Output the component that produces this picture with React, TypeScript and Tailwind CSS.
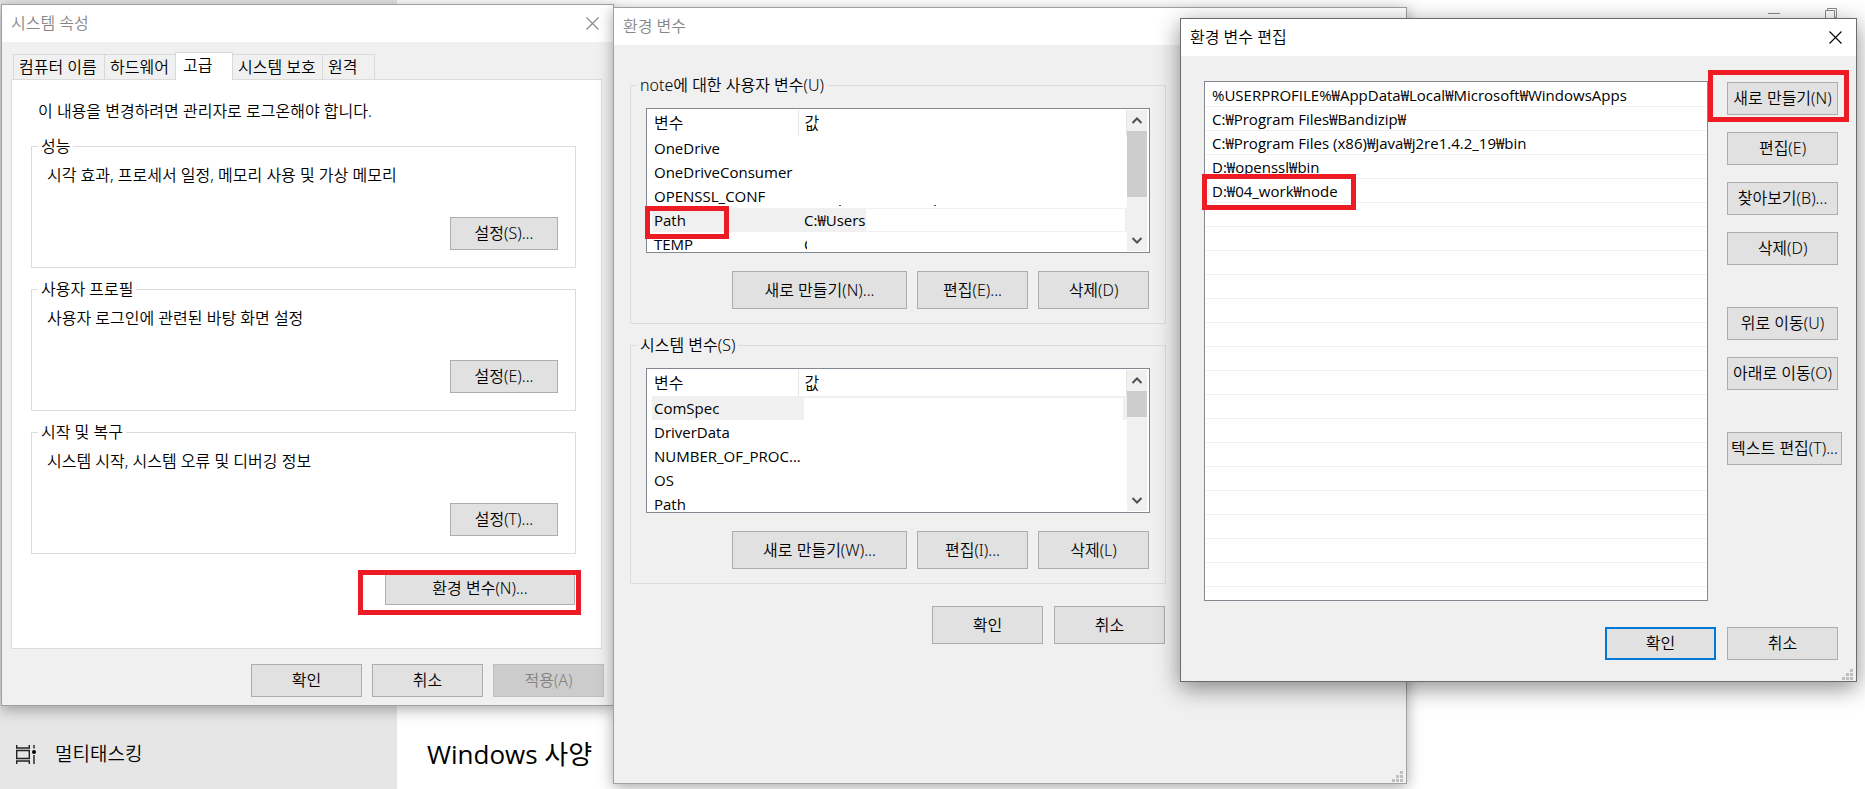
import React from 'react';
import clsx from 'clsx';

interface VariableRow {
  name: string;
  value?: React.ReactNode;
  selected?: boolean;
}

const userVariables: VariableRow[] = [
  { name: 'OneDrive' },
  { name: 'OneDriveConsumer' },
  { name: 'OPENSSL_CONF', value: <TextRemains /> },
  {
    name: 'Path',
    selected: true,
    value: (
      <div className="flex h-6 py-px pr-[2px] leading-[22px]">
        <span className="whitespace-nowrap">C:₩Users</span>
        <span className="flex-1 bg-white" />
      </div>
    ),
  },
  { name: 'TEMP', value: <div className="w-[3px] overflow-hidden">C</div> },
];

const systemVariables: VariableRow[] = [
  {
    name: 'ComSpec',
    selected: true,
    value: (
      <div className="flex h-6 pt-[2px] pr-1">
        <span className="flex-1 bg-white" />
      </div>
    ),
  },
  { name: 'DriverData' },
  { name: 'NUMBER_OF_PROC...' },
  { name: 'OS' },
  { name: 'Path' },
];

const pathEntries = [
  '%USERPROFILE%₩AppData₩Local₩Microsoft₩WindowsApps',
  'C:₩Program Files₩Bandizip₩',
  'C:₩Program Files (x86)₩Java₩j2re1.4.2_19₩bin',
  'D:₩openssl₩bin',
  'D:₩04_work₩node',
];

const EMPTY_ROWS = 16;

const systemGroups = [
  { title: '성능', text: '시각 효과, 프로세서 일정, 메모리 사용 및 가상 메모리', button: '설정(S)...' },
  { title: '사용자 프로필', text: '사용자 로그인에 관련된 바탕 화면 설정', button: '설정(E)...' },
  { title: '시작 및 복구', text: '시스템 시작, 시스템 오류 및 디버깅 정보', button: '설정(T)...' },
];

function TextRemains() {
  return (
    <svg viewBox="0 0 140 24" className="h-6 w-[140px] fill-gray-600">
      <rect x="35" y="21" width="2" height="1" />
      <rect x="130" y="21" width="2" height="1" />
    </svg>
  );
}

function CloseIcon() {
  return (
    <svg viewBox="0 0 13 13" className="h-[13px] w-[13px]" fill="none" stroke="currentColor" strokeWidth="1.1">
      <path d="M.5.5l12 12M12.5.5l-12 12" />
    </svg>
  );
}

function ResizeGrip() {
  return (
    <svg viewBox="0 0 11 11" className="absolute right-[3px] bottom-[1px] h-[11px] w-[11px] fill-[#bfbfbf]">
      <path d="M8 0h3v3H8zM4 4h3v3H4zM8 4h3v3H8zM0 8h3v3H0zM4 8h3v3H4zM8 8h3v3H8z" />
    </svg>
  );
}

function Highlight({ className }: { className: string }) {
  return <div className={clsx('pointer-events-none absolute z-10 border-[#ed1c24]', className)} />;
}

interface ButtonProps extends React.ButtonHTMLAttributes<HTMLButtonElement> {
  primary?: boolean;
}

function Button({ primary, className, ...props }: ButtonProps) {
  return (
    <button
      type="button"
      className={clsx(
        'whitespace-nowrap pb-px leading-5 text-center',
        props.disabled ? 'border border-[#bfbfbf] bg-[#cccccc] text-[#838383]' : 'bg-[#e1e1e1]',
        !props.disabled && (primary ? 'border-2 border-[#0078d7]' : 'border border-[#adadad]'),
        className
      )}
      {...props}
    />
  );
}

interface WindowProps {
  title: string;
  active?: boolean;
  closable?: boolean;
  className: string;
  children: React.ReactNode;
}

function Window({ title, active, closable, className, children }: WindowProps) {
  return (
    <section
      className={clsx(
        'absolute border bg-[#f0f0f0]',
        active
          ? 'border-[#6b6b6b] shadow-[0_6px_22px_rgba(0,0,0,0.45)]'
          : 'border-[#a0a0a0] shadow-[0_3px_14px_rgba(0,0,0,0.35)]',
        className
      )}
    >
      <header
        className={clsx(
          'flex h-[37px] items-center justify-between bg-white pr-[14px] pb-px pl-[9px]',
          active ? 'text-black' : 'text-[#888888]'
        )}
      >
        <h2>{title}</h2>
        {closable && (
          <button type="button" aria-label="닫기">
            <CloseIcon />
          </button>
        )}
      </header>
      {children}
    </section>
  );
}

interface GroupProps {
  title: string;
  className?: string;
  children: React.ReactNode;
}

function Group({ title, className, children }: GroupProps) {
  return (
    <fieldset className="min-w-0 border border-[#dcdcdc]">
      <legend className="ml-[6px] px-[3px] leading-5">{title}</legend>
      <div className={className}>{children}</div>
    </fieldset>
  );
}

function Tab({ label, active, className }: { label: string; active?: boolean; className: string }) {
  return (
    <button
      type="button"
      role="tab"
      aria-selected={!!active}
      className={clsx(
        'border-t border-r border-[#d9d9d9] text-left whitespace-nowrap leading-5',
        active ? 'relative -mb-px h-[28px] border-l bg-white pb-1 pl-[7px]' : 'h-[25px] bg-[#f0f0f0] pl-[5px]',
        className
      )}
    >
      {label}
    </button>
  );
}

function SystemProperties() {
  return (
    <Window title="시스템 속성" closable className="top-1 left-px w-[613px]">
      <div className="pt-[10px] pr-[11px] pb-2 pl-[9px]">
        <div role="tablist" className="flex items-end pl-[2px]">
          <Tab label="컴퓨터 이름" className="w-[92px] border-l" />
          <Tab label="하드웨어" className="w-[70px] border-r-0" />
          <Tab label="고급" active className="w-[58px]" />
          <Tab label="시스템 보호" className="w-[90px]" />
          <Tab label="원격" className="w-[52px]" />
        </div>
        <div className="border border-[#dcdcdc] bg-white pt-[19px] pr-[25px] pb-[43px] pl-[19px]">
          <p className="mb-[13px] pl-[7px] leading-6">이 내용을 변경하려면 관리자로 로그온해야 합니다.</p>
          <div className="flex flex-col gap-[11px]">
            {systemGroups.map((group) => (
              <Group key={group.title} title={group.title} className="pr-[17px] pb-[17px] pl-[15px]">
                <p className="pt-[7px] leading-6">{group.text}</p>
                <div className="mt-[30px] flex justify-end">
                  <Button className="h-[33px] w-[108px]">{group.button}</Button>
                </div>
              </Group>
            ))}
          </div>
          <div className="mt-[18px] flex justify-end pr-px">
            <div className="relative">
              <Button className="h-[33px] w-[190px]">환경 변수(N)...</Button>
              <Highlight className="-top-[2px] -right-[6px] -bottom-[10px] -left-[27px] border-[5px]" />
            </div>
          </div>
        </div>
        <div className="-mr-[2px] mt-[15px] flex justify-end gap-[10px]">
          <Button className="h-[33px] w-[111px]">확인</Button>
          <Button className="h-[33px] w-[111px]">취소</Button>
          <Button className="h-[33px] w-[111px]" disabled>
            적용(A)
          </Button>
        </div>
      </div>
    </Window>
  );
}

function ScrollBar({ thumb }: { thumb: string }) {
  return (
    <div className="flex w-5 shrink-0 flex-col bg-[#f0f0f0]">
      <svg viewBox="0 0 20 21" className="h-[21px] w-5" fill="none" stroke="#505050" strokeWidth="2">
        <path d="M5.500 13l4.500-4.500 4.500 4.500" />
      </svg>
      <div className={clsx('bg-[#cdcdcd]', thumb)} />
      <svg viewBox="0 0 20 21" className="mt-auto h-[21px] w-5" fill="none" stroke="#505050" strokeWidth="2">
        <path d="M5.500 8l4.500 4.500 4.500-4.500" />
      </svg>
    </div>
  );
}

function VariableTable({ rows, thumb }: { rows: VariableRow[]; thumb: string }) {
  return (
    <div className="flex h-[145px] overflow-hidden border border-[#828790] bg-white p-px">
      <div className="min-w-0 flex-1 overflow-hidden">
        <table className="w-full table-fixed border-collapse text-left">
          <thead>
            <tr className="h-[26px]">
              <th className="w-[150px] border-r border-[#e5e5e5] pl-[6px] font-[350] leading-6">변수</th>
              <th className="border-r border-[#e5e5e5] pl-[6px] font-[350] leading-6">값</th>
            </tr>
          </thead>
          <tbody className="font-['Open_Sans','Noto_Sans_CJK_KR',sans-serif] text-[15px] font-normal">
            {rows.map((row) => (
              <tr key={row.name} className="h-6 leading-6">
                <td className="pl-1 whitespace-nowrap">
                  <div className={clsx('pl-[2px]', row.selected && 'bg-[#f0f0f0]')}>{row.name}</div>
                </td>
                <td className={clsx('h-6 p-0 pl-[6px]', row.selected && 'bg-[#f0f0f0]')}>{row.value}</td>
              </tr>
            ))}
          </tbody>
        </table>
      </div>
      <ScrollBar thumb={thumb} />
      <div className="w-px" />
    </div>
  );
}

interface VariableGroupProps {
  title: string;
  rows: VariableRow[];
  thumb: string;
  actions: string[];
  children?: React.ReactNode;
}

function VariableGroup({ title, rows, thumb, actions, children }: VariableGroupProps) {
  const [create, edit, remove] = actions;
  return (
    <Group title={title} className="pt-[13px] pr-[15px] pb-[14px] pl-[15px]">
      <div className="relative">
        <VariableTable rows={rows} thumb={thumb} />
        {children}
      </div>
      <div className="mt-[18px] flex justify-end gap-[10px] pr-px">
        <Button className="h-[38px] w-[175px]">{create}</Button>
        <Button className="h-[38px] w-[111px]">{edit}</Button>
        <Button className="h-[38px] w-[111px]">{remove}</Button>
      </div>
    </Group>
  );
}

function EnvironmentVariables() {
  return (
    <Window title="환경 변수" className="top-[7px] left-[613px] w-[794px]">
      <div className="w-[552px] pt-[30px] pb-[139px] pl-4">
        <div className="flex flex-col gap-[11px]">
          <VariableGroup
            title="note에 대한 사용자 변수(U)"
            rows={userVariables}
            thumb="h-[66px]"
            actions={['새로 만들기(N)...', '편집(E)...', '삭제(D)']}
          >
            <Highlight className="top-[98px] -left-px h-[33px] w-[84px] border-[5px]" />
          </VariableGroup>
          <VariableGroup
            title="시스템 변수(S)"
            rows={systemVariables}
            thumb="h-[26px]"
            actions={['새로 만들기(W)...', '편집(I)...', '삭제(L)']}
          />
        </div>
        <div className="mt-[22px] flex justify-end gap-[11px] pr-px">
          <Button className="h-[38px] w-[111px]">확인</Button>
          <Button className="h-[38px] w-[111px]">취소</Button>
        </div>
      </div>
      <ResizeGrip />
    </Window>
  );
}

function EditVariable() {
  return (
    <Window title="환경 변수 편집" active closable className="top-[18px] left-[1180px] w-[677px]">
      <div className="pt-[25px] pr-[14px] pb-[21px] pl-[23px]">
        <div className="flex gap-[19px]">
          <ul className="flex-1 border border-[#828790] bg-white p-px font-['Open_Sans','Noto_Sans_CJK_KR',sans-serif] text-[15px] font-normal">
            {pathEntries.map((entry, i) => (
              <li key={entry} className="relative h-6 border-b border-[#f0f0f0] pl-[6px] leading-6 whitespace-nowrap">
                {entry}
                {i === pathEntries.length - 1 && (
                  <Highlight className="-top-[5px] -left-1 h-[36px] w-[154px] border-[5px]" />
                )}
              </li>
            ))}
            {Array.from({ length: EMPTY_ROWS }, (_, i) => (
              <li key={i} className="h-6 border-b border-[#f0f0f0]" />
            ))}
            <li className="h-3" />
          </ul>
          <div className="flex w-[115px] flex-col items-start gap-[17px] pt-px">
            <div className="relative">
              <Button className="h-[33px] w-[111px]">새로 만들기(N)</Button>
              <Highlight className="-top-3 -right-[11px] -bottom-[7px] -left-[19px] border-[5px]" />
            </div>
            <Button className="h-[33px] w-[111px]">편집(E)</Button>
            <Button className="h-[33px] w-[111px]">찾아보기(B)...</Button>
            <Button className="h-[33px] w-[111px]">삭제(D)</Button>
            <Button className="mt-[25px] h-[33px] w-[111px]">위로 이동(U)</Button>
            <Button className="h-[33px] w-[111px]">아래로 이동(O)</Button>
            <Button className="mt-[25px] h-[33px] w-full">텍스트 편집(T)...</Button>
          </div>
        </div>
        <div className="mt-[26px] flex justify-end gap-[11px] pr-1">
          <Button primary className="h-[33px] w-[111px]">
            확인
          </Button>
          <Button className="h-[33px] w-[111px]">취소</Button>
        </div>
      </div>
      <ResizeGrip />
    </Window>
  );
}

function MultitaskingIcon() {
  return (
    <svg viewBox="0 0 20 19" className="h-[19px] w-5" fill="none" stroke="#222" strokeWidth="1.4">
      <path d="M.7 0v3h12.600V0M.7 19v-3h12.600v3M.7 5.500h12.600v8H.7z" />
      <path d="M18 0v3.500M18 10v9" />
      <circle cx="18" cy="7" r="2" fill="#000" stroke="none" />
    </svg>
  );
}

// Settings app that stays open behind the dialogs
function SettingsPage() {
  return (
    <div className="flex min-h-screen">
      <nav className="flex w-[397px] shrink-0 flex-col justify-end bg-[#e6e6e6] pb-[19px] pl-4">
        <a href="#multitasking" className="flex items-center gap-[19px] text-[19px] leading-8 text-black">
          <MultitaskingIcon />
          멀티태스킹
        </a>
      </nav>
      <main className="flex flex-1 flex-col justify-between bg-white pt-2 pb-[17px] pl-[30px]">
        <div className="flex justify-end gap-[45px] pr-7 text-[#888888]">
          <svg viewBox="0 0 12 12" className="h-3 w-3" stroke="currentColor">
            <path d="M0 5.500h12" />
          </svg>
          <svg viewBox="0 0 12 12" className="h-3 w-3" fill="none" stroke="currentColor">
            <path d="M.5 2.500h9v9h-9zM2.500 2.500v-2h9v9h-2" />
          </svg>
        </div>
        <h1 className="font-['Open_Sans','Noto_Sans_CJK_KR',sans-serif] text-[26px] leading-9 font-normal">
          Windows 사양
        </h1>
      </main>
    </div>
  );
}

export default function App() {
  return (
    <div className="relative min-h-screen overflow-hidden font-['Noto_Sans','Noto_Sans_CJK_KR',sans-serif] text-base font-[350] text-black">
      <SettingsPage />
      <SystemProperties />
      <EnvironmentVariables />
      <EditVariable />
    </div>
  );
}
